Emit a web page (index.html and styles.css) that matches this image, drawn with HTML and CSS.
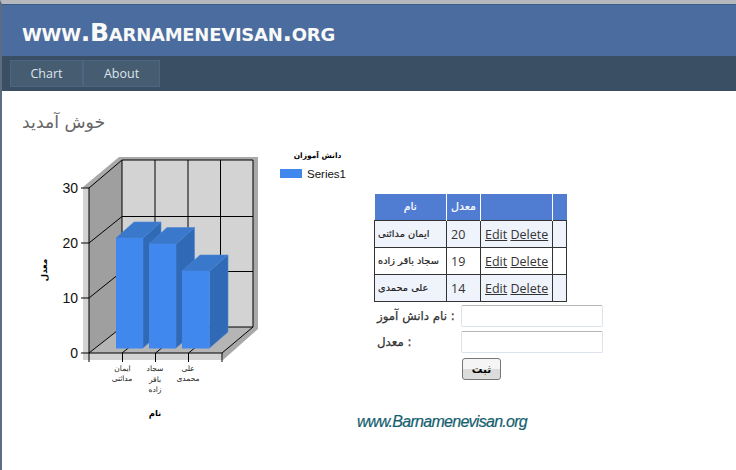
FILE: index.html
```html
<!DOCTYPE html>
<html lang="fa">
<head>
<meta charset="utf-8">
<title>www.Barnamenevisan.org</title>
<link rel="stylesheet" href="styles.css">
</head>
<body>
<div class="page">
  <header class="banner"><h1>www.Barnamenevisan.org</h1></header>
  <nav class="menu"><a href="#">Chart</a><a href="#">About</a></nav>
  <main class="main">
    <h2 class="welcome">خوش آمدید</h2>
    <div class="content">
      <svg class="chart" width="352" height="280" viewBox="22 145 352 280" role="img" aria-label="chart">
        <polygon class="shadow-dark" points="83,187 119,157 258,157 258,329 223,360 83,360"/>
        <polygon class="shadow-light" points="83,187 89,188 89,353 222,353 223,360 83,360"/>
        <polygon class="wall-back" points="122,160 253,160 253,327 122,327"/>
        <polygon class="wall-left" points="89,188 122,160 122,327 89,353"/>
        <polygon class="floor" points="89,353 122,327 253,327 222,353"/>
        <g class="grid">
          <path d="M122 160H253V327H122ZM155 160V327M188 160V327M220.500 160V327"/>
          <path d="M122 216.500H253M122 271.500H253"/>
          <path d="M89 188L122 160M89 243L122 216.500M89 298L122 271.500M89 353L122 327"/>
          <path d="M89 188V353H222L253 327"/>
          <path d="M122 353L155 327M155.500 353L188 327M188.500 353L220.500 327"/>
          <path d="M81 188H89M81 243H89M81 298H89M81 353H89"/>
          <path d="M89 353V362M122.500 353V362M155.500 353V362M188.500 353V362M222 353V362"/>
        </g>
        <g>
          <polygon class="bar-top" points="116,238 134,222 161,222 143,238"/>
          <polygon class="bar-side" points="143,238 161,222 161,332 143,348"/>
          <rect class="bar-front" x="116" y="238" width="27" height="110.500"/>
          <polygon class="bar-top" points="149,244 167,227.500 194.500,227.500 176,244"/>
          <polygon class="bar-side" points="176,244 194.500,227.500 194.500,332 176,348"/>
          <rect class="bar-front" x="149" y="244" width="27" height="104.500"/>
          <polygon class="bar-top" points="182,271 200,255 228,255 209.500,271"/>
          <polygon class="bar-side" points="209.500,271 228,255 228,332 209.500,348"/>
          <rect class="bar-front" x="182" y="271" width="27.500" height="77.500"/>
        </g>
        <text class="y-num" x="78" y="193">30</text>
        <text class="y-num" x="78" y="248">20</text>
        <text class="y-num" x="78" y="303">10</text>
        <text class="y-num" x="78" y="358">0</text>
        <text class="cat" x="122.500" y="371">ایمان</text>
        <text class="cat" x="122" y="381">مدائنی</text>
        <text class="cat" x="155" y="371">سجاد</text>
        <text class="cat" x="155" y="382">باقر</text>
        <text class="cat" x="155" y="392">زاده</text>
        <text class="cat" x="188" y="371">علی</text>
        <text class="cat" x="188" y="381">محمدی</text>
        <text class="axis-title" x="155" y="416">نام</text>
        <text class="axis-title" transform="translate(47 270) rotate(-90)">معدل</text>
        <text class="legend-title" x="317.500" y="158">دانش آموزان</text>
        <rect class="bar-front" x="280" y="169" width="22" height="9"/>
        <text class="legend-text" x="307" y="178">Series1</text>
      </svg>
      <div class="side">
        <table class="grid-table">
          <thead>
            <tr><th class="col-name">نام</th><th class="col-avg">معدل</th><th class="col-act"></th><th class="col-end"></th></tr>
          </thead>
          <tbody>
            <tr class="alt"><td class="fa">ایمان مدائنی</td><td>20</td><td><a href="#">Edit</a> <a href="#">Delete</a></td><td></td></tr>
            <tr><td class="fa">سجاد باقر زاده</td><td>19</td><td><a href="#">Edit</a> <a href="#">Delete</a></td><td></td></tr>
            <tr class="alt"><td class="fa">علی محمدی</td><td>14</td><td><a href="#">Edit</a> <a href="#">Delete</a></td><td></td></tr>
          </tbody>
        </table>
        <form class="entry">
          <label class="entry-label" for="fname">نام دانش آموز :</label>
          <input class="entry-input" id="fname" type="text">
          <label class="entry-label" for="favg">معدل :</label>
          <input class="entry-input" id="favg" type="text">
          <button class="entry-button" type="button">ثبت</button>
        </form>
        <p class="site-link">www.Barnamenevisan.org</p>
      </div>
    </div>
  </main>
</div>
</body>
</html>
```
FILE: styles.css
```css
* { box-sizing: border-box; }
html, body { margin: 0; padding: 0; height: 100%; overflow: hidden; background: #fff; }
.page {
  height: 470px;
  border-top: 4px solid #b5b8bd;
  border-left: 2px solid #5b6d7e;
  background: #fff;
  font-family: "Open Sans", sans-serif;
}
.banner {
  height: 52px;
  background: #4b6c9e;
  border-top: 1px solid #3f5c88;
  padding: 13px 0 0 20px;
}
.banner h1 {
  margin: 0;
  font: bold 25px/30px "DejaVu Sans", sans-serif;
  font-variant: small-caps;
  letter-spacing: -0.25px;
  color: #f9f9f9;
  white-space: nowrap;
}
.menu {
  height: 35px;
  background: #3a4f63;
  padding: 4px 0 0 8px;
  display: flex;
  align-items: flex-start;
}
.menu a {
  height: 27px;
  line-height: 25px;
  background: #465c71;
  border: 1px solid #4b6680;
  color: #dde4ec;
  font-size: 12.500px;
  text-decoration: none;
  text-align: center;
}
.menu a:nth-child(1) { width: 73px; }
.menu a:nth-child(2) { width: 77px; }
.main { padding: 17px 0 0 20px; }
.welcome {
  margin: 0;
  font: normal 17.300px/28px "DejaVu Sans", sans-serif;
  color: #666;
  height: 37px;
}
.content { display: flex; align-items: flex-start; }
.chart { display: block; flex: none; }
.shadow-dark { fill: #a9a9a9; }
.shadow-light { fill: #d3d3d3; }
.wall-back { fill: #d3d3d3; }
.wall-left { fill: #9f9f9f; }
.floor { fill: #b5b5b5; }
.grid path { fill: none; stroke: #000; stroke-width: 1; }
.bar-front { fill: #4188ee; }
.bar-top { fill: #3a78cc; stroke: #4f86d4; stroke-width: 0.6; }
.bar-side { fill: #3069b5; stroke: #4f86d4; stroke-width: 0.6; }
.y-num { font: 14px "Liberation Sans", sans-serif; fill: #111; text-anchor: end; }
.cat { font: 7.500px "DejaVu Sans", sans-serif; fill: #222; text-anchor: middle; }
.axis-title { font: bold 8.500px "DejaVu Sans", sans-serif; fill: #000; text-anchor: middle; }
.legend-title { font: bold 7.500px "DejaVu Sans", sans-serif; fill: #000; text-anchor: middle; }
.legend-text { font: 11.500px "Liberation Sans", sans-serif; fill: #111; }
.side { width: 240px; padding-top: 49px; flex: none; }
.grid-table {
  border-collapse: collapse;
  table-layout: fixed;
  width: 192px;
  font-size: 12.500px;
  color: #333;
}
.grid-table th {
  height: 26px;
  padding: 0;
  background: #507cd1;
  color: #fff;
  font: normal 11px "DejaVu Sans", sans-serif;
  -webkit-text-stroke: 0.2px #fff;
  border-left: 1px solid #fff;
  border-right: 1px solid #fff;
}
.grid-table th:first-child { border-left: 0; }
.grid-table th:last-child { border-right: 0; }
.col-name { width: 72px; }
.col-avg { width: 34px; }
.col-act { width: 72px; }
.col-end { width: 14px; }
.grid-table td {
  height: 27px;
  padding: 1px 3px 0 4px;
  border: 1px solid #333;
  white-space: nowrap;
}
.grid-table .alt td { background: #eff3fb; }
.grid-table td.fa {
  font: 9.800px "DejaVu Sans", sans-serif;
  color: #222;
  -webkit-text-stroke: 0.2px #222;
  text-align: left;
  padding: 0 2px 0 3px;
}
.grid-table a { color: #333; }
.entry {
  display: grid;
  grid-template-columns: 87px 142px;
  row-gap: 4px;
  margin-top: 3px;
}
.entry-label {
  font: normal 11.800px/22px "DejaVu Sans", sans-serif;
  -webkit-text-stroke: 0.25px #333;
  color: #333;
  padding-left: 3px;
  white-space: nowrap;
}
.entry-input {
  height: 22px;
  border: 1px solid #dde3ec;
  border-top-color: #b5b5b5;
  border-radius: 2px;
  background: #fff;
}
.entry-button {
  grid-column: 2;
  width: 39px;
  height: 22px;
  margin: 1px 0 0 1px;
  padding: 0;
  border: 1px solid #777;
  border-radius: 3px;
  background: linear-gradient(#f5f5f5 50%, #dcdcdc 50%);
  font: bold 10.500px "DejaVu Sans", sans-serif;
  color: #000;
}
.site-link {
  margin: 32px 0 0 -17px;
  font: italic 16px/20px "Liberation Sans", sans-serif;
  letter-spacing: -0.72px;
  -webkit-text-stroke: 0.2px #14606e;
  color: #14606e;
}
```
